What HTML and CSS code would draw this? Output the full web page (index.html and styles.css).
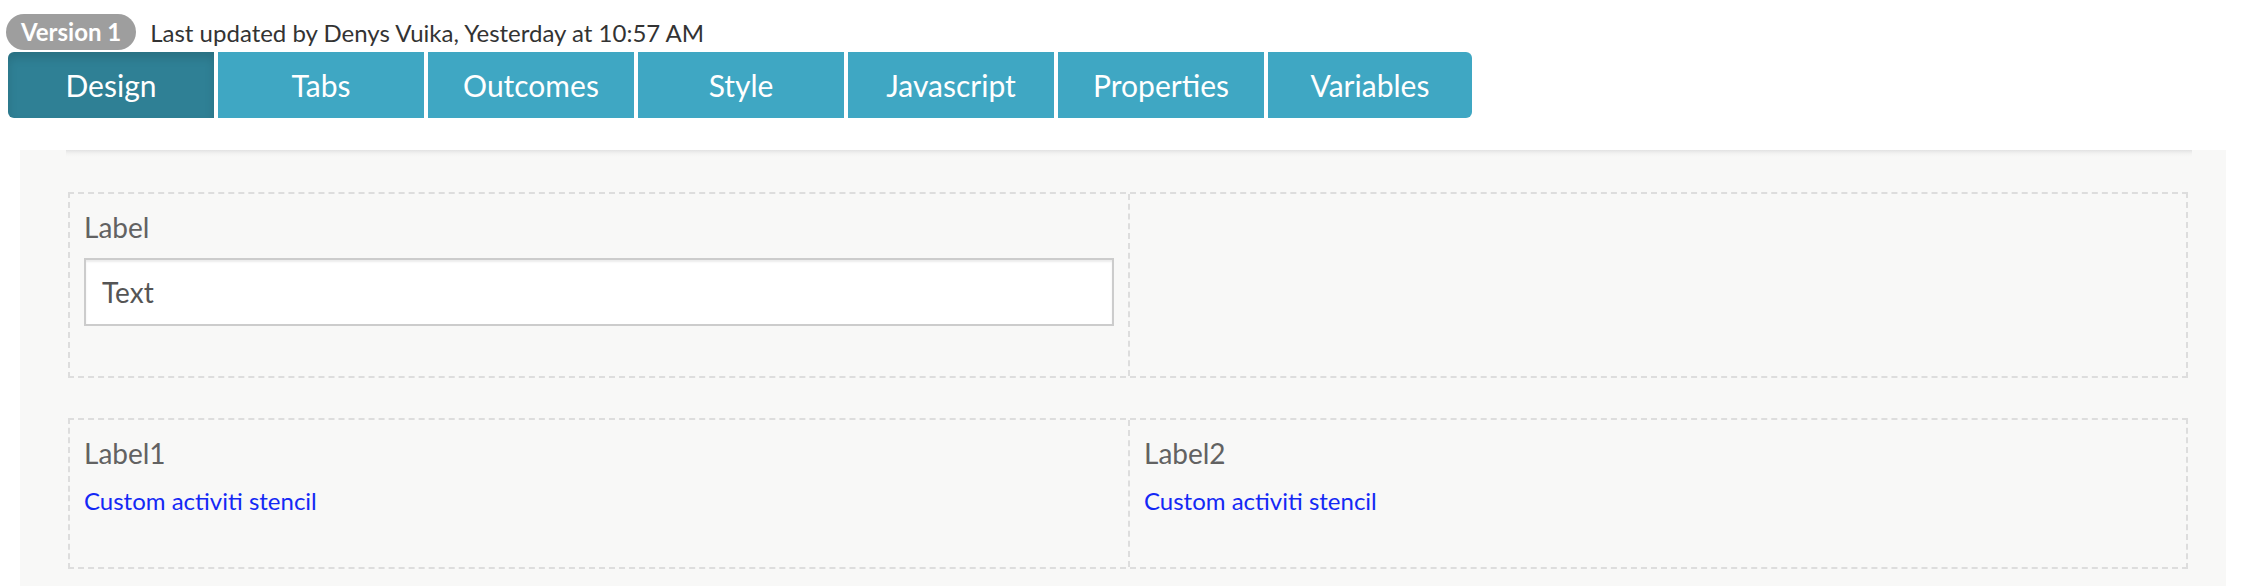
FILE: index.html
```html
<!DOCTYPE html>
<html>
<head>
<meta charset="utf-8">
<link rel="stylesheet" href="styles.css">
</head>
<body>
<div class="header">
  <div class="meta">
    <span class="badge">Version 1</span>
    <span class="updated">Last updated by Denys Vuika, Yesterday at 10:57 AM</span>
  </div>
  <div class="tabs">
    <div class="tab active">Design</div>
    <div class="tab">Tabs</div>
    <div class="tab">Outcomes</div>
    <div class="tab">Style</div>
    <div class="tab">Javascript</div>
    <div class="tab">Properties</div>
    <div class="tab">Variables</div>
  </div>
</div>
<div class="canvas">
  <div class="form">
    <div class="row row-one">
      <div class="cell">
        <div class="label">Label</div>
        <div class="input">Text</div>
      </div>
      <div class="cell"></div>
    </div>
    <div class="row row-two">
      <div class="cell">
        <div class="label">Label1</div>
        <div class="link">Custom activiti stencil</div>
      </div>
      <div class="cell">
        <div class="label">Label2</div>
        <div class="link">Custom activiti stencil</div>
      </div>
    </div>
  </div>
</div>
</body>
</html>
```
FILE: styles.css
```css
html, body {
  margin: 0;
  padding: 0;
  background: #ffffff;
}
body {
  font-family: Lato, "Open Sans", sans-serif;
  height: 586px;
  overflow: hidden;
}
.header {
  padding: 14px 0 0 6px;
}
.meta {
  display: flex;
  align-items: center;
  gap: 14px;
  height: 36px;
}
.badge {
  display: inline-block;
  height: 36px;
  line-height: 36px;
  padding: 0 15px;
  border-radius: 18px;
  background: #9e9e9e;
  color: #ffffff;
  font-size: 24px;
  font-weight: 700;
}
.updated {
  font-size: 24px;
  color: #333333;
}
.tabs {
  display: flex;
  gap: 4px;
  margin: 2px 0 0 2px;
}
.tab {
  width: 206px;
  height: 66px;
  display: flex;
  align-items: center;
  justify-content: center;
  background: #3fa7c3;
  color: #ffffff;
  font-size: 30px;
}
.tab:first-child {
  border-radius: 6px 0 0 6px;
}
.tab:last-child {
  width: 204px;
  border-radius: 0 6px 6px 0;
}
.tab.active {
  background: #2f8095;
  box-shadow: inset 0 6px 10px rgba(0, 0, 0, 0.125);
}
.canvas {
  margin: 32px 18px 0 20px;
  height: 436px;
  background: #f8f8f7;
  padding: 0 34px 0 46px;
}
.form {
  height: 100%;
  padding: 42px 4px 0 2px;
  box-sizing: border-box;
  background: linear-gradient(to bottom, #e2e2e2 0, #ececec 2px, #f4f4f3 4px, #f8f8f7 7px) no-repeat;
}
.row {
  display: grid;
  grid-template-columns: 1fr 1fr;
  border: 2px dashed #dddddd;
  margin-bottom: 40px;
}
.cell {
  padding: 13px 14px 50px;
}
.cell + .cell {
  border-left: 2px dashed #dddddd;
}
.row-two .cell {
  padding-bottom: 49px;
}
.label {
  font-size: 28px;
  line-height: 40px;
  color: #626262;
  margin-bottom: 11px;
}
.input {
  height: 68px;
  box-sizing: border-box;
  border: 2px solid #cccccc;
  background: #ffffff;
  padding: 0 16px;
  font-size: 28px;
  line-height: 64px;
  color: #555555;
  box-shadow: inset 0 2px 2px rgba(0, 0, 0, 0.075);
}
.link {
  font-size: 24px;
  line-height: 34px;
  color: #1428f5;
}
```
